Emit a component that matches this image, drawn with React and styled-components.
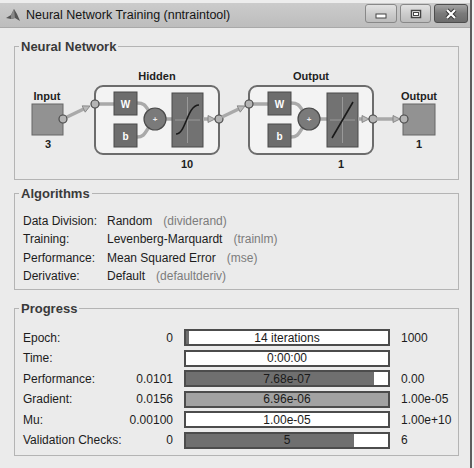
import React from 'react'
import styled, { createGlobalStyle } from 'styled-components'

const GlobalStyle = createGlobalStyle`
html, body {
    margin: 0;
    padding: 0;
    background: #f2f2f2;
}
body {
    font-family: "Liberation Sans", Arial, sans-serif;
    color: #1c1c1c;
}
`

const Window = styled.div`
width: 472px;
height: 468px;
box-sizing: border-box;
border-right: 2px solid #5e5e5e;
background: #ebebeb;
display: flex;
flex-direction: column;
overflow: hidden;
`

const TitleBar = styled.div`
height: 24px;
border-top: 3px solid #ededed;
background: linear-gradient(#cbcbcb, #bdbdbd);
border-bottom: 1px solid #a9a9a9;
display: flex;
align-items: center;
padding-left: 5px;
gap: 5px;
`

const Title = styled.div`
flex: 1;
font-size: 12.5px;
color: #151515;
`

const WinButtons = styled.div`
display: flex;
gap: 3px;
margin-right: 2px;
align-self: flex-start;
margin-top: 1px;
`

const WinButton = styled.div`
width: ${p => p.$w}px;
height: 19px;
box-sizing: border-box;
border: 1px solid ${p => p.$close ? '#4d4d4d' : '#888'};
border-radius: 3px;
background: ${p => p.$close
        ? 'linear-gradient(#a3a3a3, #7a7a7a 50%, #6c6c6c)'
        : 'linear-gradient(#e2e2e2, #cdcdcd 50%, #bcbcbc)'};
display: flex;
align-items: center;
justify-content: center;
`

const Content = styled.div`
flex: 1;
padding: 18px 11px 0 14px;
`

const Panel = styled.div`
position: relative;
box-sizing: border-box;
height: ${p => p.$h}px;
margin-top: ${p => p.$mt || 0}px;
border: 1px solid #b4b4b4;
`

const Legend = styled.div`
position: absolute;
top: -8px;
left: 4px;
padding: 0 2px;
background: #ebebeb;
font-size: 13px;
line-height: 15px;
font-weight: bold;
color: #3a3a3a;
`

const Diagram = styled.svg`
display: block;
font-family: "Liberation Sans", Arial, sans-serif;
`

const AlgoGrid = styled.div`
display: grid;
grid-template-columns: 84px 1fr;
grid-auto-rows: 18.3px;
align-items: center;
padding: 18px 0 0 8px;
font-size: 12px;
white-space: nowrap;
`

const AlgoValue = styled.div`
display: flex;
gap: 11px;
`

const Note = styled.span`
color: #7c7c7c;
`

const ProgressGrid = styled.div`
display: grid;
grid-template-columns: 95px 44px 206px 1fr;
column-gap: 11px;
grid-auto-rows: 17px;
row-gap: 3.6px;
align-items: center;
padding: 20px 0 0 8px;
font-size: 12px;
white-space: nowrap;
`

const Num = styled.div`
text-align: right;
`

const Bar = styled.div`
position: relative;
height: 17px;
box-sizing: border-box;
border: 2px solid #4c4c4c;
background: #fff;
display: flex;
`

const Fill = styled.div`
height: 100%;
background: ${p => p.$light ? '#a2a2a2' : '#6f6f6f'};
`

const BarText = styled.div`
position: absolute;
inset: 0;
display: flex;
align-items: center;
justify-content: center;
font-size: 12px;
color: #1a1a1a;
`

const algorithms = [
    ['Data Division:', 'Random', '(dividerand)'],
    ['Training:', 'Levenberg-Marquardt', '(trainlm)'],
    ['Performance:', 'Mean Squared Error', '(mse)'],
    ['Derivative:', 'Default', '(defaultderiv)'],
]

const progress = [
    { label: 'Epoch:', start: '0', text: '14 iterations', end: '1000', fill: 1.4 },
    { label: 'Time:', start: '', text: '0:00:00', end: '', fill: 0 },
    { label: 'Performance:', start: '0.0101', text: '7.68e-07', end: '0.00', fill: 93.2 },
    { label: 'Gradient:', start: '0.0156', text: '6.96e-06', end: '1.00e-05', fill: 100, light: true },
    { label: 'Mu:', start: '0.00100', text: '1.00e-05', end: '1.00e+10', fill: 0 },
    { label: 'Validation Checks:', start: '0', text: '5', end: '6', fill: 83.3 },
]

const Dot = ({ x, y }) => (
    <circle cx={x} cy={y} r="4" fill="#b4b4b4" stroke="#4a4a4a" strokeWidth="1.2" />
)

const Arrow = ({ x1, y1, x2, y2 }) => {
    const a = Math.atan2(y2 - y1, x2 - x1)
    const bx = x2 - Math.cos(a) * 7
    const by = y2 - Math.sin(a) * 7
    const px = Math.sin(a) * 3.5
    const py = -Math.cos(a) * 3.5
    return (
        <g>
            <line x1={x1} y1={y1} x2={bx} y2={by} stroke="#a9a9a9" strokeWidth="3.5" />
            <polygon points={`${x2},${y2} ${bx + px},${by + py} ${bx - px},${by - py}`}
                fill="#b8b8b8" stroke="#7a7a7a" strokeWidth="0.8" />
        </g>
    )
}

const Label = ({ x, y, children, size = 11 }) => (
    <text x={x} y={y} textAnchor="middle" fontSize={size} fontWeight="bold" fill="#1e1e1e">{children}</text>
)

const Layer = ({ x, title, units, linear }) => {
    const wx = x + 19
    const sx = x + 60
    const tx = linear ? x + 78 : x + 77
    return (
        <g>
            <Label x={x + 62} y={79}>{title}</Label>
            <rect x={x} y={85} width={124} height={68} rx={8} fill="#f3f3f3" stroke="#6c6c6c" strokeWidth="2" />
            <line x1={x + 3} y1={103} x2={wx} y2={103} stroke="#a9a9a9" strokeWidth="3.5" />
            <path d={`M${wx + 23} 102 C ${wx + 30} 102, ${sx - 10} 104, ${sx - 6} 110`} fill="none" stroke="#a9a9a9" strokeWidth="3.5" />
            <path d={`M${wx + 23} 136 C ${wx + 30} 136, ${sx - 10} 132, ${sx - 6} 126`} fill="none" stroke="#a9a9a9" strokeWidth="3.5" />
            <rect x={wx} y={91} width={23} height={23} fill="#6d6d6d" stroke="#4a4a4a" />
            <text x={wx + 11.5} y={107} textAnchor="middle" fontSize="10" fontWeight="bold" fill="#fff">W</text>
            <rect x={wx} y={123} width={23} height={23} fill="#6d6d6d" stroke="#4a4a4a" />
            <text x={wx + 11.5} y={139} textAnchor="middle" fontSize="10" fontWeight="bold" fill="#fff">b</text>
            <line x1={sx + 11} y1={118} x2={tx} y2={118} stroke="#a9a9a9" strokeWidth="3.5" />
            <circle cx={sx} cy={118} r={11} fill="#7a7a7a" stroke="#4a4a4a" strokeWidth="1.2" />
            <text x={sx} y={121} textAnchor="middle" fontSize="8" fontWeight="bold" fill="#eee">+</text>
            <rect x={tx} y={92} width={31} height={54} fill="#727272" stroke="#4a4a4a" />
            <line x1={tx + 15.5} y1={96} x2={tx + 15.5} y2={142} stroke="#999" strokeWidth="1" />
            <line x1={tx + 3} y1={119} x2={tx + 28} y2={119} stroke="#999" strokeWidth="1" />
            {linear
                ? <line x1={tx + 5} y1={137} x2={tx + 26} y2={101} stroke="#1a1a1a" strokeWidth="1.6" />
                : <path d={`M${tx + 4} 133 C ${tx + 14} 133, ${tx + 15} 104, ${tx + 27} 104`} fill="none" stroke="#1a1a1a" strokeWidth="1.6" />}
            <Arrow x1={tx + 31} y1={118} x2={x + 120} y2={118} />
            <Dot x={x} y={103} />
            <Dot x={x + 124} y={118} />
            <Label x={x + 92} y={167}>{units}</Label>
        </g>
    )
}

const Network = () => (
    <Diagram width="442" height="132" viewBox="15 46 442 132">
        <Label x={47} y={99}>Input</Label>
        <rect x={32} y={103} width={31} height={31} fill="#929292" stroke="#666" />
        <Label x={48} y={147}>3</Label>
        <Arrow x1={67} y1={116} x2={90} y2={105} />
        <Dot x={63} y={118} />

        <Layer x={95} title="Hidden" units="10" />
        <Arrow x1={222} y1={116} x2={245} y2={105} />
        <Layer x={249} title="Output" units="1" linear />

        <Arrow x1={376} y1={118} x2={400} y2={118} />
        <Label x={419} y={99}>Output</Label>
        <rect x={403} y={103} width={32} height={31} fill="#929292" stroke="#666" />
        <Dot x={404} y={118} />
        <Label x={419} y={147}>1</Label>
    </Diagram>
)

const MatlabIcon = () => (
    <svg width="16" height="16" viewBox="0 0 16 16">
        <path d="M1 11 L6 8 L9 2 L12 7 L15 14 L10 11 L6 12 Z" fill="#555" />
        <path d="M9 2 L10 11 L6 12 L6 8 Z" fill="#888" />
    </svg>
)

const App = () => {
    return (
        <>
            <GlobalStyle />
            <Window>
                <TitleBar>
                    <MatlabIcon />
                    <Title>Neural Network Training (nntraintool)</Title>
                    <WinButtons>
                        <WinButton $w={32}>
                            <svg width="12" height="10" viewBox="0 0 12 10">
                                <rect x="1" y="5" width="10" height="4" fill="#fff" stroke="#444" />
                            </svg>
                        </WinButton>
                        <WinButton $w={31}>
                            <svg width="12" height="10" viewBox="0 0 12 10">
                                <rect x="1.5" y="1.5" width="9" height="7" fill="#fff" stroke="#444" strokeWidth="1.5" />
                                <rect x="3.5" y="3.5" width="5" height="3" fill="#fff" stroke="#444" />
                            </svg>
                        </WinButton>
                        <WinButton $w={34} $close>
                            <svg width="14" height="12" viewBox="0 0 14 12">
                                <path d="M3 2 L11 10 M11 2 L3 10" stroke="#333" strokeWidth="4" />
                                <path d="M3 2 L11 10 M11 2 L3 10" stroke="#fff" strokeWidth="2.2" />
                            </svg>
                        </WinButton>
                    </WinButtons>
                </TitleBar>
                <Content>
                    <Panel $h={134}>
                        <Legend>Neural Network</Legend>
                        <Network />
                    </Panel>
                    <Panel $h={97} $mt={13}>
                        <Legend>Algorithms</Legend>
                        <AlgoGrid>
                            {algorithms.map(([label, value, note]) => (
                                <React.Fragment key={label}>
                                    <div>{label}</div>
                                    <AlgoValue>
                                        <span>{value}</span>
                                        <Note>{note}</Note>
                                    </AlgoValue>
                                </React.Fragment>
                            ))}
                        </AlgoGrid>
                    </Panel>
                    <Panel $h={148} $mt={18}>
                        <Legend>Progress</Legend>
                        <ProgressGrid>
                            {progress.map(row => (
                                <React.Fragment key={row.label}>
                                    <div>{row.label}</div>
                                    <Num>{row.start}</Num>
                                    <Bar>
                                        <Fill $light={row.light} style={{ width: row.fill + '%' }} />
                                        <BarText>{row.text}</BarText>
                                    </Bar>
                                    <div>{row.end}</div>
                                </React.Fragment>
                            ))}
                        </ProgressGrid>
                    </Panel>
                </Content>
            </Window>
        </>
    )
}

export default App
